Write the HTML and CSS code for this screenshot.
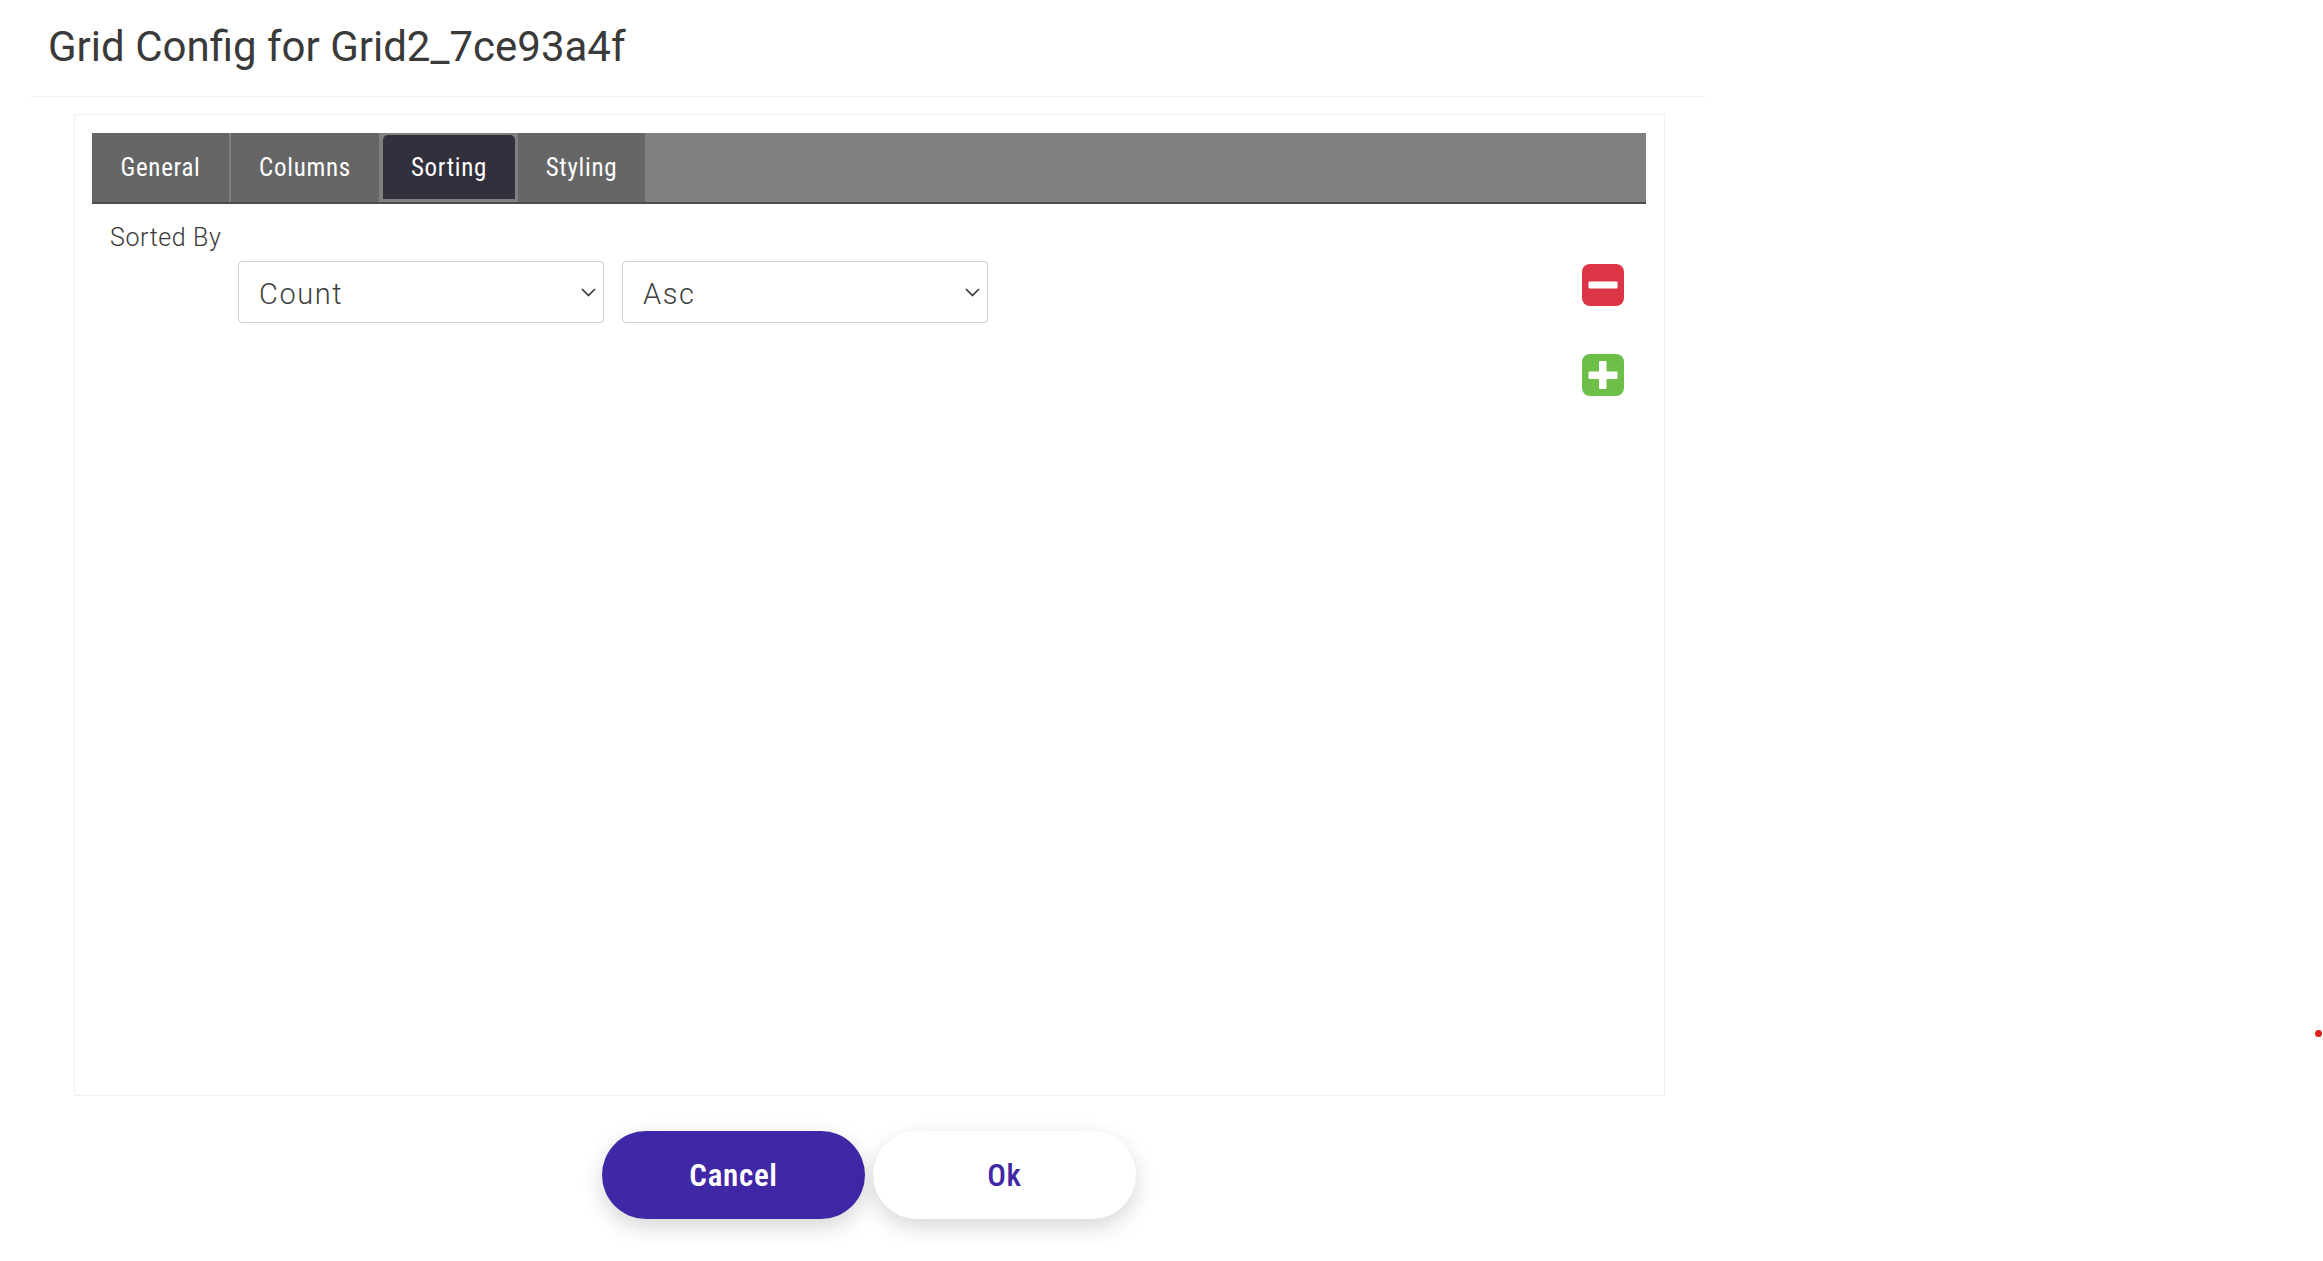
FILE: index.html
```html
<!DOCTYPE html>
<html lang="en">
<head>
    <meta charset="UTF-8">
    <title>Grid Config</title>
    <link rel="stylesheet" href="styles.css">
</head>
<body>

<div class="modal">
    <div class="modal-header">
        <h2>Grid Config for Grid2_7ce93a4f</h2>
    </div>

    <div class="panel">
        <div class="tabs">
            <a class="tab tab-general">General</a>
            <a class="tab tab-columns">Columns</a>
            <a class="tab tab-sorting active">Sorting</a>
            <a class="tab tab-styling">Styling</a>
        </div>

        <div class="sort-label">Sorted By</div>
        <div class="sort-row">
            <div class="select-wrap">
                <select class="field">
                    <option>Count</option>
                </select>
                <svg class="chevron" width="15" height="9" viewBox="0 0 15 9">
                    <path d="M1 1 L7.5 7.5 L14 1" fill="none" stroke="#3a3a3a" stroke-width="1.7"/>
                </svg>
            </div>
            <div class="select-wrap">
                <select class="field">
                    <option>Asc</option>
                </select>
                <svg class="chevron" width="15" height="9" viewBox="0 0 15 9">
                    <path d="M1 1 L7.5 7.5 L14 1" fill="none" stroke="#3a3a3a" stroke-width="1.7"/>
                </svg>
            </div>
            <div class="row-actions">
                <!-- remove / add -->
                <svg class="icon-btn" width="42" height="42" viewBox="0 0 42 42">
                    <rect width="42" height="42" rx="8" fill="#dc3545"/>
                    <rect x="6.5" y="17.5" width="29" height="7" rx="1" fill="#fff"/>
                </svg>
                <svg class="icon-btn" width="42" height="42" viewBox="0 0 42 42">
                    <rect width="42" height="42" rx="8" fill="#6dbf47"/>
                    <rect x="6.5" y="17.5" width="29" height="7.5" rx="1" fill="#fff"/>
                    <rect x="17" y="7" width="7.5" height="28" rx="1" fill="#fff"/>
                </svg>
            </div>
        </div>
    </div>

    <div class="modal-footer">
        <button class="btn btn-primary">Cancel</button>
        <button class="btn btn-light">Ok</button>
    </div>
</div>

<span class="red-dot"></span>

</body>
</html>
```

FILE: styles.css
```css
body {
    font-family: Roboto, "Liberation Sans", sans-serif;
    font-stretch: 85%;
    background-color: #ffffff;
    color: #3a3a3a;
    margin: 0;
    height: 1261px;
    overflow: hidden;
}
.modal {
    width: 1676px;
    margin-left: 30px;
}
.modal-header {
    height: 96px;
    border-bottom: 1px solid #f2f2f2;
}
.modal-header h2 {
    margin: 0;
    padding: 22px 0 0 18px;
    font-size: 42px;
    font-stretch: 90%;
    line-height: 50px;
    font-weight: 400;
    white-space: nowrap;
}
.panel {
    box-sizing: border-box;
    width: 1591px;
    height: 982px;
    margin: 17px 0 0 44px;
    padding: 18px 17px 0;
    border: 1px solid #f0f0f0;
}
.tabs {
    display: flex;
    height: 71px;
    width: 1554px;
    box-sizing: border-box;
    background-color: #808080;
    border-bottom: 2px solid #4d4d4d;
}
.tab {
    display: flex;
    align-items: center;
    justify-content: center;
    background-color: #666666;
    color: #ffffff;
    font-size: 25px;
    letter-spacing: 0.7px;
}
.tab-general { width: 137px; }
.tab-columns { width: 148px; margin-left: 2px; }
.tab-sorting { width: 132px; margin-left: 4px; }
.tab-styling { width: 127px; margin-left: 3px; }
.tab.active {
    background-color: #32303c;
    border-radius: 5px 5px 0 0;
    margin-top: 2px;
    height: 64px;
}
.sort-label {
    margin: 19px 0 0 18px;
    font-size: 25px;
    font-stretch: 90%;
    line-height: 30px;
    font-weight: 300;
    letter-spacing: 0.6px;
}
.sort-row {
    display: flex;
    align-items: flex-start;
    gap: 18px;
    margin-top: 8px;
    padding-left: 146px;
}
.select-wrap {
    position: relative;
    width: 366px;
    height: 62px;
}
.field {
    appearance: none;
    box-sizing: border-box;
    width: 100%;
    height: 100%;
    padding: 4px 40px 0 20px;
    font-family: inherit;
    font-stretch: 90%;
    font-size: 29px;
    font-weight: 300;
    letter-spacing: 1.6px;
    color: #3f3f3f;
    background-color: #ffffff;
    border: 1px solid #cfcfcf;
    border-radius: 4px;
}
.chevron {
    position: absolute;
    right: 8px;
    top: 27px;
    pointer-events: none;
}
.row-actions {
    display: flex;
    flex-direction: column;
    gap: 48px;
    margin-left: auto;
    margin-right: 23px;
    padding-top: 3px;
}
.modal-footer {
    display: flex;
    gap: 8px;
    margin-top: 35px;
    padding-left: 572px;
}
.btn {
    width: 263px;
    height: 88px;
    padding-top: 2px;
    border: none;
    border-radius: 44px;
    font-family: inherit;
    font-stretch: inherit;
    font-size: 31px;
    letter-spacing: 0.7px;
    box-shadow: 0 8px 22px rgba(0, 0, 0, 0.16);
}
.btn-primary {
    background-color: #3f27a6;
    color: #ffffff;
    font-weight: 600;
}
.btn-light {
    background-color: #ffffff;
    color: #3f27a6;
    font-weight: 500;
}
.red-dot {
    position: absolute;
    left: 2315px;
    top: 1030px;
    width: 7px;
    height: 7px;
    border-radius: 50%;
    background-color: #e0201c;
}
```
